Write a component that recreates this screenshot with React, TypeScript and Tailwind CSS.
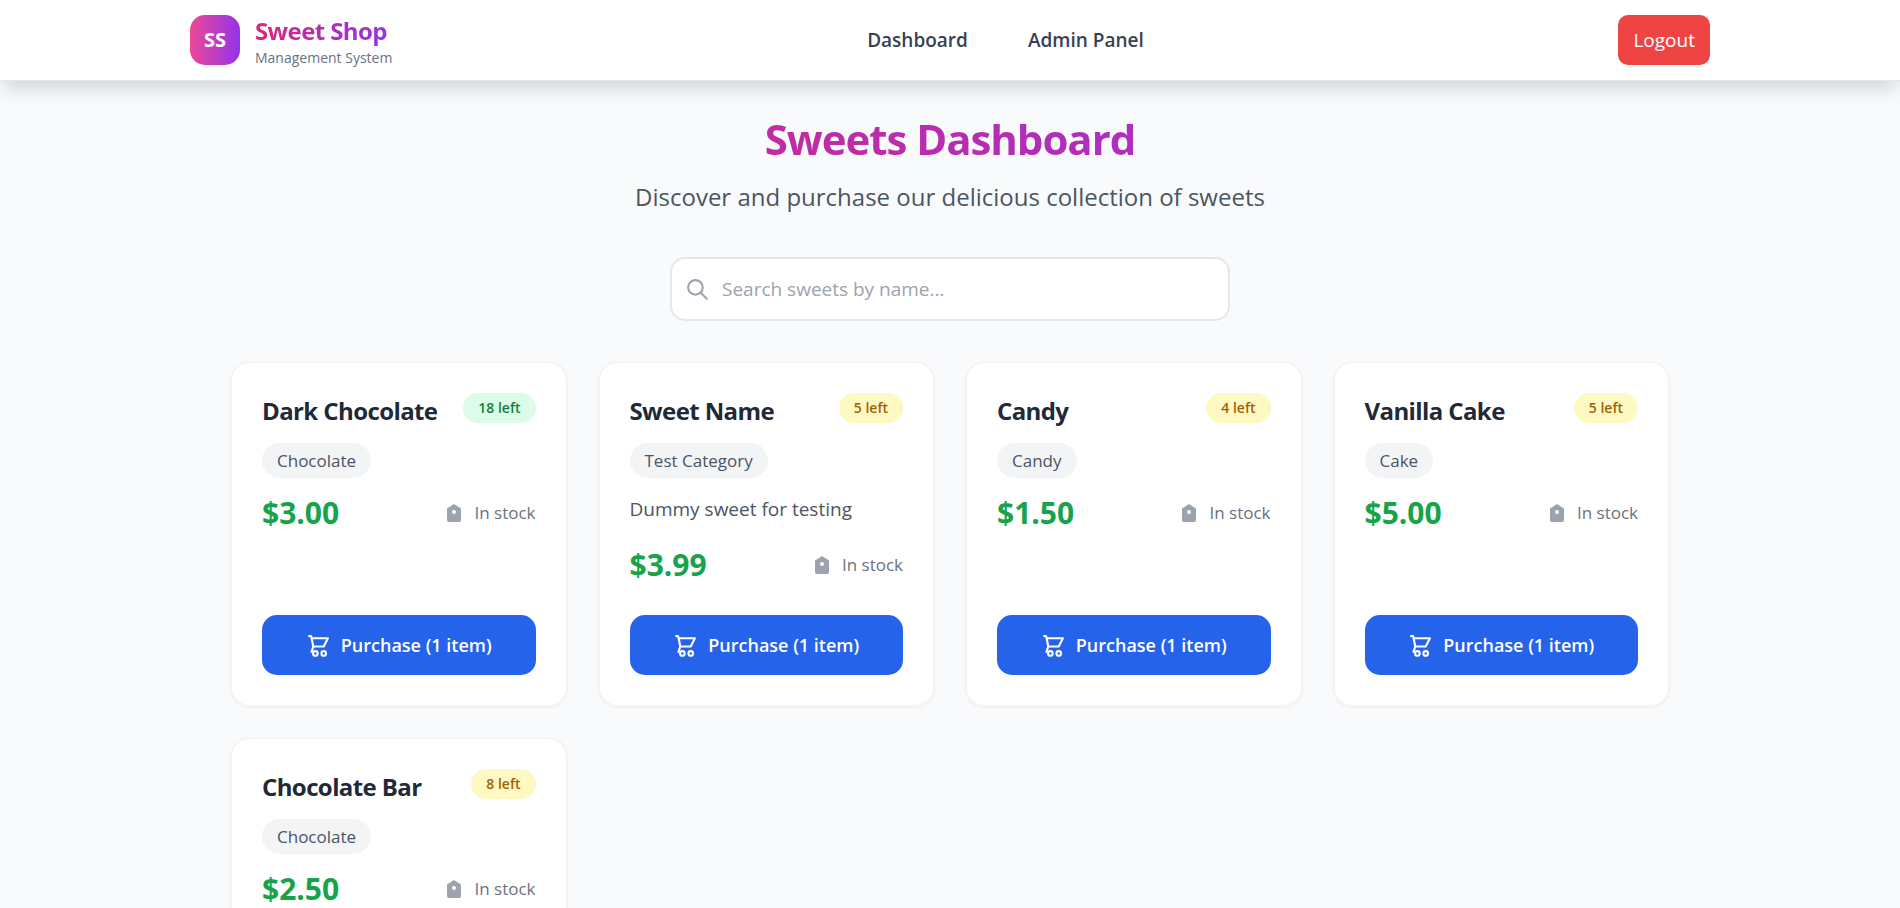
type Sweet = { name: string; left: number; category: string; description?: string; price: string };

const sweets: Sweet[] = [
  { name: 'Dark Chocolate', left: 18, category: 'Chocolate', price: '$3.00' },
  { name: 'Sweet Name', left: 5, category: 'Test Category', description: 'Dummy sweet for testing', price: '$3.99' },
  { name: 'Candy', left: 4, category: 'Candy', price: '$1.50' },
  { name: 'Vanilla Cake', left: 5, category: 'Cake', price: '$5.00' },
  { name: 'Chocolate Bar', left: 8, category: 'Chocolate', price: '$2.50' },
];

function TagIcon() {
  return (
    <svg viewBox="0 0 20 20" className="size-5 text-[#9ca3af]" fill="currentColor" aria-hidden="true">
      <path fillRule="evenodd" clipRule="evenodd" d="M10 1l7 4.500V17a2 2 0 0 1-2 2H5a2 2 0 0 1-2-2V5.500L10 1zm0 6a2 2 0 1 0 0 4 2 2 0 0 0 0-4z" />
    </svg>
  );
}

function CartIcon() {
  return (
    <svg viewBox="0 0 24 24" className="size-[25px]" fill="none" stroke="currentColor" strokeWidth="2" strokeLinecap="round" strokeLinejoin="round" aria-hidden="true">
      <path d="M3 3h2l.4 2M7 13h10l4-8H5.400M7 13L5.400 5M7 13l-1.800 5.200" />
      <circle cx="9" cy="19.600" r="2.200" />
      <circle cx="17" cy="19.600" r="2.200" />
    </svg>
  );
}

function SweetCard({ sweet }: { sweet: Sweet }) {
  const badge = sweet.left > 10 ? 'bg-[#dcfce7] text-[#15803d]' : 'bg-[#fef9c3] text-[#a16207]';
  return (
    <article className="flex min-h-[346px] flex-col rounded-[20px] border-2 border-[#f3f4f6] bg-white p-[30px] shadow-xs">
      <div className="mb-[15px] flex h-[35px] items-start justify-between">
        <h2 className="text-[24px] leading-[35px] font-bold tracking-tight text-[#1f2937]">{sweet.name}</h2>
        <span className={`rounded-full px-[15px] text-[14px] leading-[30px] font-semibold ${badge}`}>{sweet.left} left</span>
      </div>
      <span className="mb-[15px] self-start rounded-full bg-[#f3f4f6] px-[15px] text-[17px] leading-[35px] text-[#4b5563]">
        {sweet.category}
      </span>
      {sweet.description && <p className="mb-5 text-[19px] leading-8 text-[#4b5563]">{sweet.description}</p>}
      <div className="flex items-center justify-between">
        <span className="text-[30px] leading-10 font-bold text-[#16a34a]">{sweet.price}</span>
        <span className="flex items-center gap-[10px] text-[17px] text-[#6b7280]">
          <TagIcon />
          In stock
        </span>
      </div>
      <button type="button" className="mt-auto flex h-[60px] items-center justify-center gap-[10px] rounded-[15px] bg-[#2563eb] text-[18px] font-semibold text-white">
        <CartIcon />
        Purchase (1 item)
      </button>
    </article>
  );
}

export default function App() {
  return (
    <div className="min-h-screen bg-[#f9fafb] font-['Open_Sans','Noto_Sans',sans-serif]">
      <header className="relative border-b border-[#e5e7eb] bg-white shadow-[0_12px_18px_-4px_rgba(0,0,0,0.15)]">
        <div className="mx-auto flex h-20 max-w-[1600px] items-center justify-between px-10">
          <a href="#home" className="flex items-center gap-[15px]">
            <span className="flex size-[50px] items-center justify-center rounded-[15px] bg-linear-to-r/srgb from-[#ec4899] to-[#9333ea] text-[20px] font-bold text-white">
              SS
            </span>
            <span className="flex flex-col">
              <span className="self-start bg-linear-to-r/srgb from-[#db2777] to-[#9333ea] bg-clip-text text-[24px] leading-[35px] font-bold tracking-tight text-transparent">
                Sweet Shop
              </span>
              <span className="text-[14px] leading-5 text-[#6b7280]">Management System</span>
            </span>
          </a>
          <nav className="flex gap-[60px] text-[19px] font-semibold text-[#374151]">
            <a href="#dashboard">Dashboard</a>
            <a href="#admin">Admin Panel</a>
          </nav>
          <button type="button" className="h-[50px] rounded-[10px] bg-[#ef4444] px-[15px] text-[19px] font-medium text-white">
            Logout
          </button>
        </div>
      </header>
      <main className="mx-auto max-w-[1520px] px-10 py-[30px]">
        <div className="text-center">
          <h1 className="bg-linear-to-r/srgb from-[#db2777] to-[#9333ea] bg-clip-text text-[42px] leading-[56px] font-bold tracking-tight text-transparent">
            Sweets Dashboard
          </h1>
          <p className="mt-[12px] text-[24px] leading-[35px] text-[#4b5563]">
            Discover and purchase our delicious collection of sweets
          </p>
        </div>
        <div className="mx-auto mt-[43px] mb-10 flex h-16 max-w-[560px] items-center gap-[12px] rounded-[15px] border-2 border-[#e5e7eb] bg-white px-[13px]">
          <svg viewBox="0 0 24 24" className="size-[25px] shrink-0 text-[#9ca3af]" fill="none" stroke="currentColor" strokeWidth="2" strokeLinecap="round" strokeLinejoin="round" aria-hidden="true">
            <path d="M21 21l-6-6m2-5a7 7 0 1 1-14 0 7 7 0 0 1 14 0z" />
          </svg>
          <input
            type="text"
            aria-label="Search sweets by name"
            placeholder="Search sweets by name..."
            className="min-w-0 flex-1 bg-transparent text-[19px] text-[#1f2937] outline-none placeholder:text-[#9ca3af]"
          />
        </div>
        <div className="grid grid-cols-1 gap-[30px] sm:grid-cols-2 xl:grid-cols-4">
          {sweets.map((sweet) => (
            <SweetCard key={sweet.name} sweet={sweet} />
          ))}
        </div>
      </main>
    </div>
  );
}
